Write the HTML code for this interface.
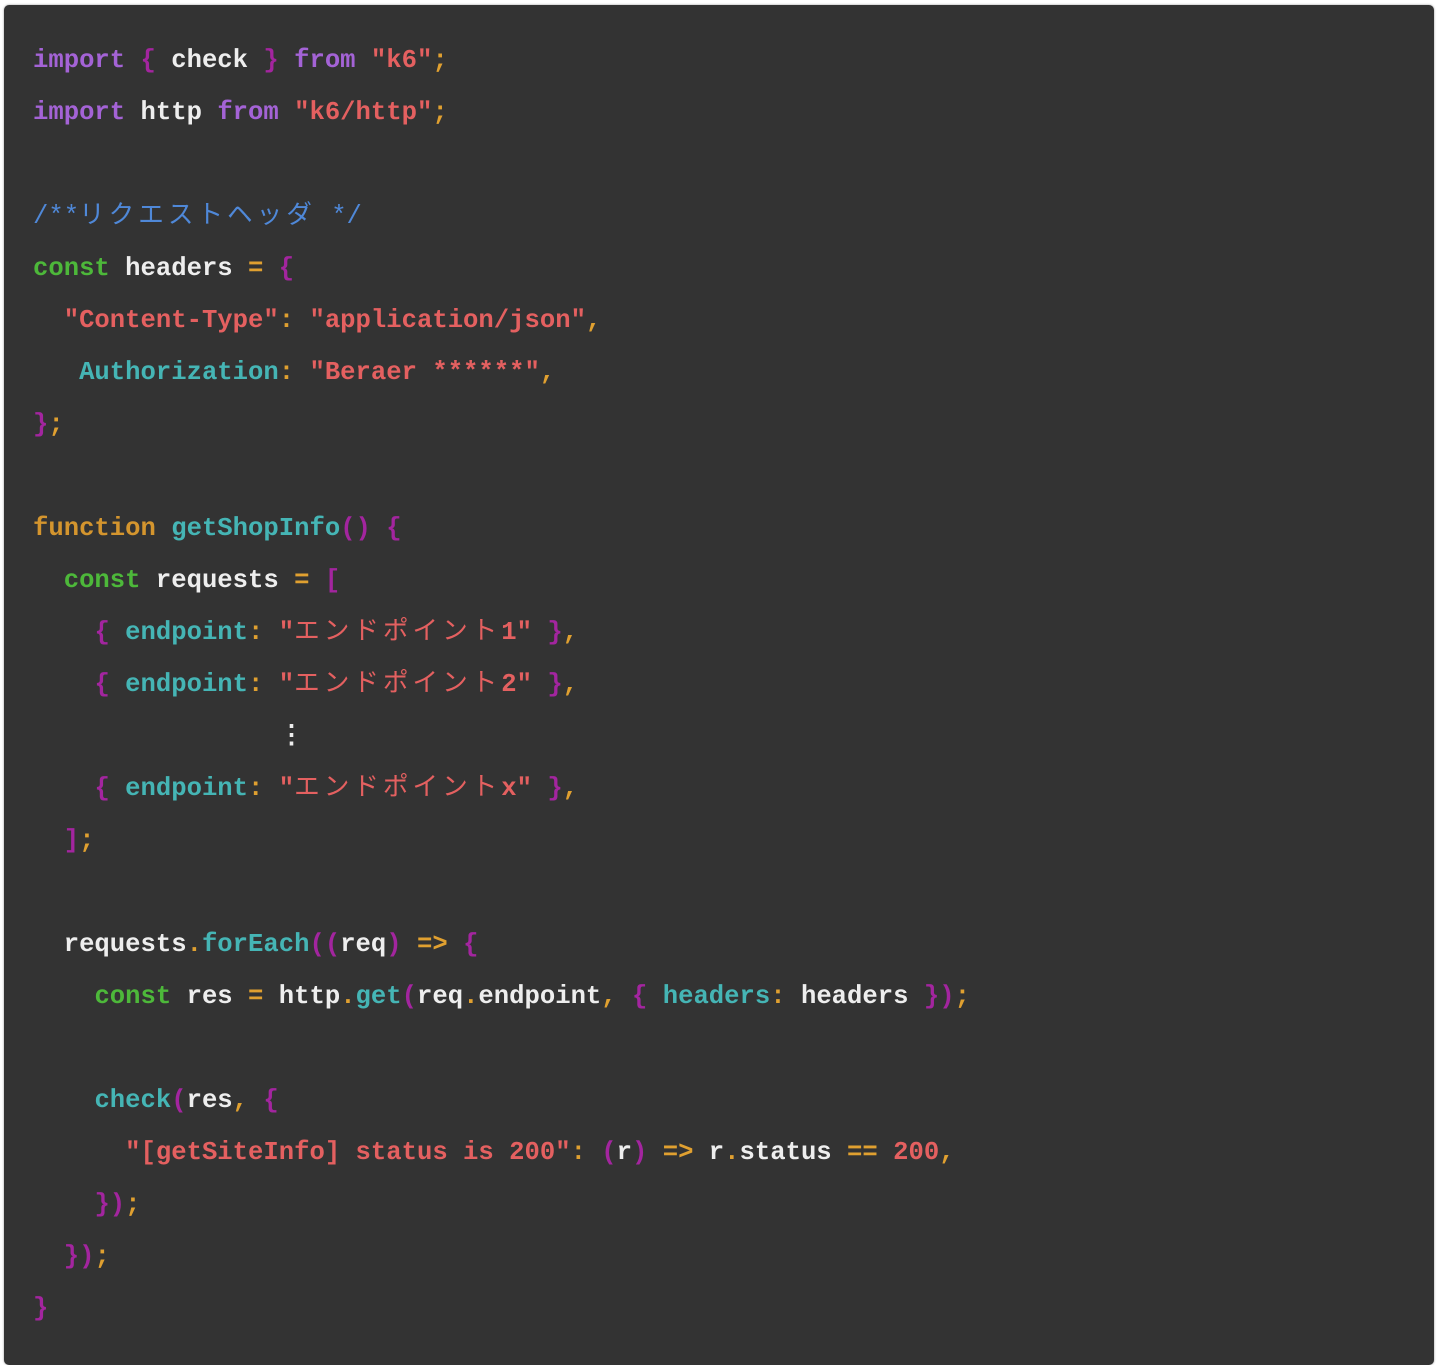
<!DOCTYPE html>
<html><head><meta charset="utf-8"><style>
html,body{margin:0;padding:0;background:#fff;width:1440px;height:1361px;overflow:hidden}
.box{position:absolute;left:4px;top:5px;width:1430px;height:1360px;background:#333;border-radius:5px;box-shadow:0 0 2px #999}
pre{margin:0;position:absolute;left:33px;top:35px;font-family:"Liberation Mono","Noto Sans CJK JP",monospace;font-size:25.6px;line-height:52px;color:#eee;font-weight:bold}
.k{color:#a463d6}.b{color:#a3259f}.s{color:#e46060}.o{color:#e0a030}.c{color:#4f88d8;font-weight:normal}.g{color:#4db83a}.p{color:#45b5b5}.f{color:#d4952e}
.j{letter-spacing:4px;font-weight:normal}
</style></head><body><div class="box"></div>
<pre><span class="k">import</span> <span class="b">{</span> check <span class="b">}</span> <span class="k">from</span> <span class="s">"k6"</span><span class="o">;</span>
<span class="k">import</span> http <span class="k">from</span> <span class="s">"k6/http"</span><span class="o">;</span>

<span class="c">/**<span class="j">リクエストヘッダ</span> */</span>
<span class="g">const</span> headers <span class="o">=</span> <span class="b">{</span>
  <span class="s">"Content-Type"</span><span class="o">:</span> <span class="s">"application/json"</span><span class="o">,</span>
   <span class="p">Authorization</span><span class="o">:</span> <span class="s">"Beraer ******"</span><span class="o">,</span>
<span class="b">}</span><span class="o">;</span>

<span class="f">function</span> <span class="p">getShopInfo</span><span class="b">()</span> <span class="b">{</span>
  <span class="g">const</span> requests <span class="o">=</span> <span class="b">[</span>
    <span class="b">{</span> <span class="p">endpoint</span><span class="o">:</span> <span class="s">"<span class="j">エンドポイント</span>1"</span> <span class="b">}</span><span class="o">,</span>
    <span class="b">{</span> <span class="p">endpoint</span><span class="o">:</span> <span class="s">"<span class="j">エンドポイント</span>2"</span> <span class="b">}</span><span class="o">,</span>
                ⋮
    <span class="b">{</span> <span class="p">endpoint</span><span class="o">:</span> <span class="s">"<span class="j">エンドポイント</span>x"</span> <span class="b">}</span><span class="o">,</span>
  <span class="b">]</span><span class="o">;</span>

  requests<span class="o">.</span><span class="p">forEach</span><span class="b">((</span>req<span class="b">)</span> <span class="o">=&gt;</span> <span class="b">{</span>
    <span class="g">const</span> res <span class="o">=</span> http<span class="o">.</span><span class="p">get</span><span class="b">(</span>req<span class="o">.</span>endpoint<span class="o">,</span> <span class="b">{</span> <span class="p">headers</span><span class="o">:</span> headers <span class="b">})</span><span class="o">;</span>

    <span class="p">check</span><span class="b">(</span>res<span class="o">,</span> <span class="b">{</span>
      <span class="s">"[getSiteInfo] status is 200"</span><span class="o">:</span> <span class="b">(</span>r<span class="b">)</span> <span class="o">=&gt;</span> r<span class="o">.</span>status <span class="o">==</span> <span class="s">200</span><span class="o">,</span>
    <span class="b">})</span><span class="o">;</span>
  <span class="b">})</span><span class="o">;</span>
<span class="b">}</span></pre>
</body></html>
